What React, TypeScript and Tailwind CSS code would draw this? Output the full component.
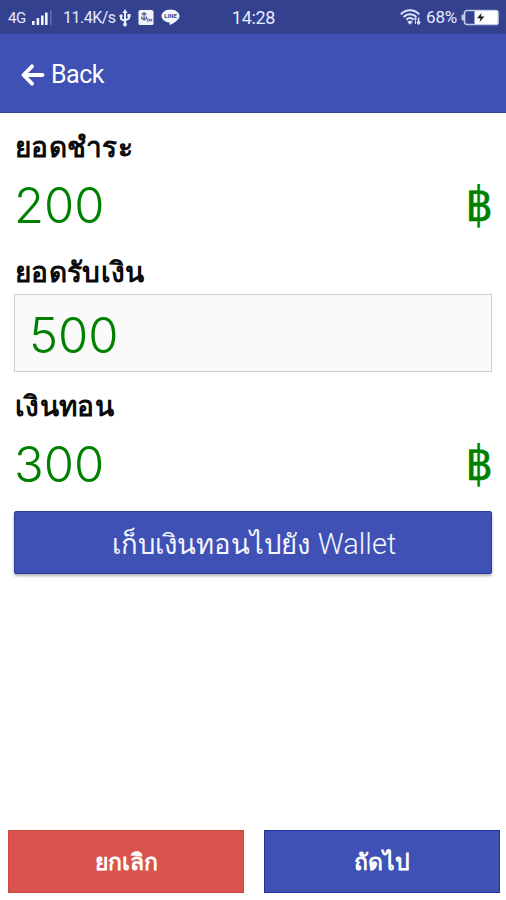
const Signal = () => (
  <svg width="21" height="18" viewBox="0 0 21 18" className="ml-[6px]">
    <g fill="#eef2ff">
      <rect x="0" y="12" width="2.6" height="4" />
      <rect x="4.6" y="9" width="2.6" height="7" />
      <rect x="9" y="6.5" width="2.6" height="9.5" />
      <rect x="13" y="3.5" width="2.6" height="12.5" />
    </g>
    <rect x="18" y="1" width="1.6" height="15" fill="#5f6cb0" />
  </svg>
);

const Usb = () => (
  <svg width="12" height="18" viewBox="0 0 12 18" className="ml-[3px]" fill="none" stroke="#e8ecfa" strokeWidth="2">
    <path d="M6 3v12M2 7v3l4 2.200M10 6.500v2.800L6 11.500" />
    <path d="M6 0l2.600 4H3.400z" fill="#e8ecfa" stroke="none" />
    <circle cx="6" cy="15.500" r="2" fill="#e8ecfa" stroke="none" />
    <circle cx="2" cy="7" r="1.700" fill="#e8ecfa" stroke="none" />
    <path d="M8.400 5h3.200v3H8.400z" fill="#e8ecfa" stroke="none" />
  </svg>
);

const AppBadge = () => (
  <svg width="16" height="17" viewBox="0 0 17 17" className="ml-[7px]">
    <rect x="0.5" y="0.5" width="16" height="16" rx="2" fill="#f1f3fb" />
    <path d="M6.500 3v9M4 5.500l2.500-2L9 5.500M4 7.500v2l2.500 1.500L9 9.500v-2" fill="none" stroke="#4c568b" strokeWidth="1.300" />
    <circle cx="11" cy="11.300" r="1.300" fill="none" stroke="#4c568b" />
    <circle cx="13.800" cy="11.300" r="1" fill="none" stroke="#4c568b" />
  </svg>
);

const LineBadge = () => (
  <div className="relative ml-[7px] h-[17px] w-[19px]">
    <svg width="19" height="17" viewBox="0 0 19 18" preserveAspectRatio="none" className="block">
      <path d="M9.500.500C4.500.500.500 3.600.500 7.500c0 3.500 3.200 6.300 7.600 6.900.800.200.600 1.600.500 2.900C13 14.900 18.500 11.500 18.500 7.500 18.500 3.600 14.500.500 9.500.500z" fill="#f5f7ff" />
    </svg>
    <span className="absolute inset-x-0 top-[3px] text-center text-[6px] leading-[8px] font-bold text-[#3d4885]">LINE</span>
  </div>
);

const Wifi = () => (
  <svg width="22" height="17" viewBox="0 0 22 17" fill="none" stroke="#dfe5fa" strokeWidth="2">
    <path d="M0.800 5.200C6-.100 14-.100 19.200 5.200M3.600 8c3.700-3.700 9.100-3.700 12.800 0M6.400 10.700c2.200-2 5-2 7.200 0" />
    <path d="M10 15.800l-2.800-3q2.800-1.900 5.600 0z" fill="#dfe5fa" stroke="none" />
    <path d="M15.400 9v6M14 10.500l1.400-1.800 1.400 1.800" strokeWidth="1" />
    <path d="M18.600 8.500v6M17 12.800l1.600 2.200 1.600-2.200" strokeWidth="1.500" />
  </svg>
);

const Battery = () => (
  <svg width="38" height="17" viewBox="0 0 38 17" className="ml-[4px]">
    <rect x="3.500" y="1.500" width="33.500" height="14" rx="2.500" fill="none" stroke="#c4cbe5" strokeWidth="1.700" />
    <rect x="0.500" y="5.500" width="2.500" height="6" rx="1" fill="#c4cbe5" />
    <rect x="13.500" y="2" width="23" height="13" rx="1" fill="#fff" />
    <path d="M20.500 4l-4.500 5.200h3.500L18.500 13l5-5.500h-3.600z" fill="#111827" />
  </svg>
);

const BackArrow = () => (
  <svg width="24" height="22" viewBox="0 0 24 22" fill="none" stroke="white" strokeWidth="3.800" strokeLinecap="round" strokeLinejoin="round">
    <path d="M21.500 11H3M11 2.300L2.500 11l8.500 8.700" />
  </svg>
);

const Label = ({ children }: { children: string }) => (
  <h2 className="h-[36px] pl-px text-[28px] leading-[36px] font-bold tracking-[0.35px] whitespace-nowrap text-[#0a0a0a]">{children}</h2>
);

const Amount = ({ value }: { value: string }) => (
  <div className="flex h-[64px] items-center justify-between text-[#008000]">
    <span className="font-['Inter'] text-[49px] leading-[64px] font-[350]">{value}</span>
    <span className="-mr-px pb-[4px] font-['DejaVu_Sans_Condensed','DejaVu_Sans',sans-serif] text-[48px] leading-[60px] [-webkit-text-stroke:0.4px_#008000]">฿</span>
  </div>
);

export default function App() {
  return (
    <div className="flex h-[900px] w-full flex-col overflow-hidden bg-white font-['Roboto','Noto_Sans',sans-serif]">
      <div className="grid h-[34px] grid-cols-[1fr_auto_1fr] items-center bg-[#33418f] pt-px pr-[7px] pl-2 text-[#e5eaff]">
        <div className="flex items-center">
          <span className="w-[18px] pt-px text-[15px] tracking-[-0.5px]">4G</span>
          <Signal />
          <span className="ml-[10px] w-[53px] pt-px text-[16px] tracking-[-0.5px] whitespace-nowrap">11.4K/s</span>
          <Usb />
          <AppBadge />
          <LineBadge />
        </div>
        <span className="text-[18px] tracking-[-0.3px]">14:28</span>
        <div className="flex items-center justify-end">
          <Wifi />
          <span className="ml-[4px] pt-px text-[17px] tracking-[-0.2px]">68%</span>
          <Battery />
        </div>
      </div>
      <header className="flex h-[79px] items-center border-b border-[#33439f] bg-[#3f51b5] pt-[3px] pl-[21px] text-white">
        <BackArrow />
        <span className="ml-[6px] pt-px text-[25px] tracking-[-0.5px]">Back</span>
      </header>
      <main className="flex flex-1 flex-col px-[14px]">
        <div className="mt-[17px]"><Label>ยอดชำระ</Label></div>
        <div className="mt-[8px]"><Amount value="200" /></div>
        <div className="mt-[17px]"><Label>ยอดรับเงิน</Label></div>
        <div className="mt-[3px] flex h-[78px] items-center border-[1.5px] border-[#cfcfcf] bg-[#fafafa] pt-[6px] pl-[14px] font-['Inter'] text-[49px] font-[350] text-[#008000]">500</div>
        <div className="mt-[17px]"><Label>เงินทอน</Label></div>
        <div className="mt-[8px]"><Amount value="300" /></div>
        <button className="mt-[14px] flex h-[63px] items-center justify-center rounded-[2px] border border-[#2c3d9f] bg-[#3f51b5] pt-[4px] pl-[2px] text-[27.500px] whitespace-nowrap text-[#f3f5ff] shadow-[0_2px_3px_rgba(0,0,0,0.3)]">
          <span>เก็บเงินทอนไปยัง</span>
          <span className="ml-[8px] text-[29px] font-[350]">Wallet</span>
        </button>
      </main>
      <footer className="mb-[7px] grid h-[63px] grid-cols-2 gap-[20px] pr-[6px] pl-[8px] text-[23px] font-bold text-white">
        <button className="border border-[#cf4540] bg-[#d9534f] pt-[4px]">ยกเลิก</button>
        <button className="border border-[#1f319c] bg-[#3f51b5] pt-[4px]">ถัดไป</button>
      </footer>
    </div>
  );
}
